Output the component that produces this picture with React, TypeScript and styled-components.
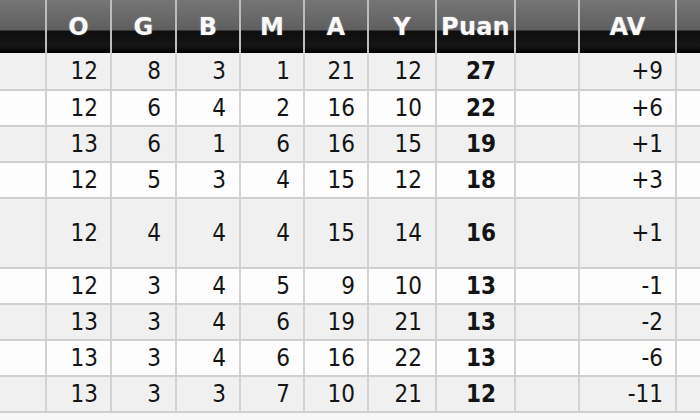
import React from "react";
import styled, { createGlobalStyle } from "styled-components";

const Global = createGlobalStyle`
  html, body { margin: 0; padding: 0; background: #f7f7f7; overflow: hidden; }
  #root { width: 700px; height: 420px; overflow: hidden; }
`;

const COLS = "47px 65px 65px 64px 64px 64px 68px 79px 64px 97px 80px";

const Table = styled.div`
  width: 760px;
  display: flex;
  flex-direction: column;
  font-family: "DejaVu Sans Condensed", "DejaVu Sans", Tahoma, sans-serif;
  font-stretch: condensed;
`;

const HeadRow = styled.div`
  display: grid;
  grid-template-columns: ${COLS};
  height: 53px;
  background: linear-gradient(
    to bottom,
    #767676 0px,
    #5e5e5e 30px,
    #0e0e0e 31px,
    #151515 46px,
    #000 53px
  );
`;

const HeadCell = styled.div`
  box-sizing: border-box;
  border-right: 2px solid #bdbdbd;
  display: flex;
  align-items: flex-end;
  justify-content: center;
  padding-bottom: 14px;
  color: #fafafa;
  font-family: "DejaVu Sans", Verdana, sans-serif;
  font-stretch: normal;
  font-weight: bold;
  font-size: 24px;
  line-height: 1;
  letter-spacing: 0.2px;
  text-shadow: 0 0 2px rgba(255, 255, 255, 0.35);
`;

const Row = styled.div<{ $h: number; $alt: boolean }>`
  display: grid;
  grid-template-columns: ${COLS};
  box-sizing: border-box;
  height: ${(p) => p.$h}px;
  border-bottom: 2px solid #cfcfcf;
  background: ${(p) => (p.$alt ? "#f0f0f0" : "#fdfdfd")};
`;

const Cell = styled.div<{ $bold?: boolean; $pad?: number }>`
  box-sizing: border-box;
  border-right: 2px solid #d2d2d2;
  display: flex;
  align-items: center;
  justify-content: flex-end;
  padding-right: ${(p) => p.$pad ?? 12}px;
  color: #141414;
  font-size: 24px;
  font-weight: ${(p) => (p.$bold ? "bold" : "normal")};
  line-height: 1;
`;

const headers = ["", "O", "G", "B", "M", "A", "Y", "Puan", "", "AV", ""];

const rows: Array<[number, number, number, number, number, number, number, string]> = [
  [12, 8, 3, 1, 21, 12, 27, "+9"],
  [12, 6, 4, 2, 16, 10, 22, "+6"],
  [13, 6, 1, 6, 16, 15, 19, "+1"],
  [12, 5, 3, 4, 15, 12, 18, "+3"],
  [12, 4, 4, 4, 15, 14, 16, "+1"],
  [12, 3, 4, 5, 9, 10, 13, "-1"],
  [13, 3, 4, 6, 19, 21, 13, "-2"],
  [13, 3, 4, 6, 16, 22, 13, "-6"],
  [13, 3, 3, 7, 10, 21, 12, "-11"],
];

const heights = [38, 36, 36, 36, 70, 36, 36, 36, 36];

export default function App() {
  return (
    <>
      <Global />
      <Table>
        <HeadRow>
          {headers.map((h, i) => (
            <HeadCell key={i}>{h}</HeadCell>
          ))}
        </HeadRow>
        {rows.map((r, i) => (
          <Row key={i} $h={heights[i]} $alt={i % 2 === 0}>
            <Cell />
            <Cell>{r[0]}</Cell>
            <Cell $pad={14}>{r[1]}</Cell>
            <Cell $pad={13}>{r[2]}</Cell>
            <Cell $pad={13}>{r[3]}</Cell>
            <Cell $pad={12}>{r[4]}</Cell>
            <Cell $pad={13}>{r[5]}</Cell>
            <Cell $bold $pad={18}>{r[6]}</Cell>
            <Cell />
            <Cell $pad={12}>{r[7]}</Cell>
            <Cell />
          </Row>
        ))}
      </Table>
    </>
  );
}
